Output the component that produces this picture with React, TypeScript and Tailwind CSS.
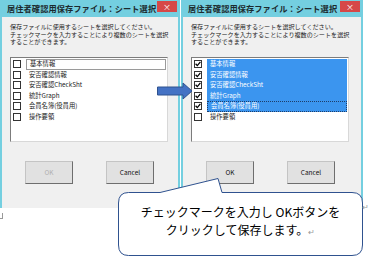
import React from 'react';

const items = ['基本情報', '安否確認情報', '安否確認CheckSht', '統計Graph', '会員名簿(役員用)', '操作要領'];

function CheckBox({ checked }: { checked: boolean }) {
  return (
    <div className="w-[8px] h-[8px] border border-[#333] bg-white flex items-center justify-center shrink-0">
      {checked && (
        <svg width="6" height="6" viewBox="0 0 6 6">
          <path d="M0.6 2.8 L2.3 4.6 L5.4 0.9" fill="none" stroke="#000" strokeWidth="1.3" />
        </svg>
      )}
    </div>
  );
}

function Dialog({ checked, focusIdx, okEnabled, width }: { checked: boolean[]; focusIdx: number; okEnabled: boolean; width: string }) {
  return (
    <div className={`${width} h-[208px] bg-[#74cfe0] px-[2px] flex flex-col`}>
      {/* title bar */}
      <div className="h-[17px] relative flex items-center pl-[5px] shrink-0">
        <span className="text-[8.2px] font-semibold text-[#1c2a2e] leading-none tracking-[0.1px]">居住者確認用保存ファイル：シート選択</span>
        <div className="absolute top-[1px] right-[1px] w-[20px] h-[11px] bg-[#d64848] flex items-center justify-center text-white text-[8px] leading-none">×</div>
      </div>

      {/* body */}
      <div className="flex-1 bg-[#f0f0f0] flex flex-col pl-[8px] pt-[6px]">
        <div className="text-[6.1px] leading-[7.5px] text-[#222]">
          <p>保存ファイルに使用するシートを選択してください。</p>
          <p>チェックマークを入力することにより複数のシートを選択</p>
          <p>することができます。</p>
        </div>

        <div className="mt-[11.5px] w-[158px] h-[85px] bg-white border border-[#7c7c7c] border-r-[#d8d8d8] border-b-[#d8d8d8] pt-[1px]">
          {items.map((label, i) => {
            const sel = checked[i];
            const focus = i === focusIdx;
            return (
              <div key={label} className="h-[10.5px] flex items-center pl-[2px]">
                <CheckBox checked={sel} />
                <div
                  className={`ml-[5px] mr-[1px] flex-1 h-full flex items-center pl-[3px] text-[6.3px] leading-none ${
                    sel ? 'bg-[#3b95ef] text-white' : 'text-[#222]'
                  } ${focus ? (sel ? 'border border-dotted border-[#1d3d6a]' : 'border border-[#9a9a9a]') : ''}`}
                >
                  {label}
                </div>
              </div>
            );
          })}
        </div>

        <div className="mt-[19px] flex gap-[33px] pl-[15px]">
          <div
            className={`w-[48px] h-[23px] bg-[#e1e1e1] border border-[#c4c4c4] border-r-[#6e6e6e] border-b-[#6e6e6e] flex items-center justify-center text-[6.5px] ${
              okEnabled ? 'text-[#111]' : 'text-[#b0b0b0]'
            }`}
          >
            OK
          </div>
          <div className="w-[48px] h-[23px] bg-[#e1e1e1] border border-[#c4c4c4] border-r-[#6e6e6e] border-b-[#6e6e6e] flex items-center justify-center text-[6.5px] text-[#111]">
            Cancel
          </div>
        </div>
      </div>
    </div>
  );
}

export default function App() {
  return (
    <div className="w-[369px] h-[263px] bg-white relative overflow-hidden" style={{ fontFamily: '"Noto Sans CJK JP", "Noto Sans", sans-serif' }}>
      <div className="flex gap-[1px]">
        <Dialog width="w-[180px]" checked={[false, false, false, false, false, false]} focusIdx={0} okEnabled={false} />
        <Dialog width="w-[182px]" checked={[true, true, true, true, true, false]} focusIdx={4} okEnabled={true} />
      </div>

      {/* arrow between dialogs */}
      <svg className="absolute left-[155px] top-[81px]" width="40" height="20" viewBox="0 0 40 20">
        <path d="M2.5 6 H28 V2 L37 10 L28 18 V14 H2.5 Z" fill="#4472c4" stroke="#2f528f" strokeWidth="1" />
      </svg>

      {/* callout */}
      <svg className="absolute left-0 top-0" width="369" height="263" viewBox="0 0 369 263">
        <path
          d="M128.5 192.5 H160 L218 178.5 L222 192.5 H352 Q362.5 192.5 362.5 203 V245 Q362.5 255.5 352 255.5 H128.5 Q118.5 255.5 118.5 245 V203 Q118.5 192.5 128.5 192.5 Z"
          fill="#fff"
          stroke="#2f528f"
          strokeWidth="1"
        />
      </svg>
      <div className="absolute left-[118px] top-[203px] w-[245px] text-center text-[12px] leading-[18px] text-black">
        <p>チェックマークを入力し OKボタンを</p>
        <p>
          クリックして保存します。<span className="text-[8px] text-[#999]">↵</span>
        </p>
      </div>

      {/* stray paragraph marks from the document */}
      <span className="absolute left-[362px] top-[203px] text-[8px] text-[#999] leading-none">↵</span>
      <div className="absolute left-0 top-[213px] w-[3px] h-[6px] border-r border-b border-[#999]" />
    </div>
  );
}
